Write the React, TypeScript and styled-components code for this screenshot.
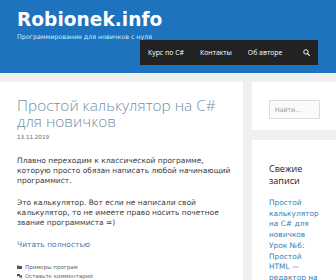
import React from 'react'
import styled, { createGlobalStyle } from 'styled-components'

const GlobalStyle = createGlobalStyle`
  html, body {
    margin: 0;
    padding: 0;
    background: #efefef;
    overflow: hidden;
  }
  body {
    font-family: 'DejaVu Sans', 'Open Sans', sans-serif;
    color: #3a3a3a;
  }
`

const Page = styled.div`
  width: 336px;
  height: 280px;
  overflow: hidden;
`

const Header = styled.header`
  background: #1e73be;
  height: 73px;
  position: relative;
  padding: 7px 0 0 17px;
  box-sizing: border-box;
`

const SiteTitle = styled.div`
  font-family: 'DejaVu Sans', sans-serif;
  font-size: 18.6px;
  font-weight: 700;
  color: #ffffff;
  line-height: 26px;
`

const Tagline = styled.div`
  font-size: 6.3px;
  color: #dbe8f5;
  line-height: 9px;
  margin-top: -1px;
`

const Nav = styled.nav`
  position: absolute;
  left: 140px;
  top: 40px;
  width: 178px;
  height: 25px;
  background: #222222;
  display: flex;
  align-items: center;
  box-sizing: border-box;
`

const NavItem = styled.span`
  font-family: 'Open Sans', sans-serif;
  color: #ffffff;
  font-size: 6.9px;
  padding: 0 8px;
  white-space: nowrap;
`

const SearchIcon = styled.svg`
  margin-left: auto;
  margin-right: 8px;
`

const Body = styled.div`
  display: flex;
  gap: 9px;
  padding-top: 9px;
`

const Main = styled.article`
  flex: 0 0 243px;
  background: #ffffff;
  padding: 16px 11px 0 17px;
  box-sizing: border-box;
  height: 200px;
`

const PostTitle = styled.h2`
  margin: 0;
  font-family: 'Open Sans', sans-serif;
  font-weight: 300;
  font-size: 15.4px;
  line-height: 16px;
  color: #7290a4;
`

const PostDate = styled.div`
  font-size: 5.6px;
  color: #666;
  margin-top: 3px;
  line-height: 8px;
`

const Para = styled.p`
  margin: 15px 0 0 0;
  font-size: 7.5px;
  line-height: 10px;
  color: #3a3a3a;
  & + & {
    margin-top: 12px;
  }
`

const ReadMore = styled.a`
  display: block;
  margin-top: 12px;
  font-size: 7.5px;
  line-height: 10px;
  color: #3b80b3;
  text-decoration: none;
`

const Meta = styled.div`
  margin-top: 13px;
  display: flex;
  flex-direction: column;
  gap: 1px;
`

const MetaRow = styled.div`
  display: flex;
  align-items: center;
  gap: 3px;
  font-size: 5.5px;
  line-height: 8px;
  color: #666;
`

const Sidebar = styled.aside`
  flex: 1;
  display: flex;
  flex-direction: column;
  gap: 10px;
`

const Widget = styled.div<{ $pad: string }>`
  background: #ffffff;
  padding: ${(p) => p.$pad};
  box-sizing: border-box;
`

const SearchInput = styled.div`
  width: 51px;
  height: 19px;
  border: 1px solid #dddddd;
  background: #fafafa;
  box-sizing: border-box;
  font-size: 6.2px;
  color: #999;
  padding: 5px 0 0 5px;
`

const WidgetTitle = styled.h3`
  margin: 0;
  font-family: 'Open Sans', sans-serif;
  font-size: 9px;
  font-weight: 400;
  line-height: 12px;
  color: #222;
`

const RecentList = styled.ul`
  list-style: none;
  margin: 11px 0 0 0;
  padding: 0;
`

const RecentItem = styled.li`
  font-size: 7.4px;
  line-height: 10.7px;
  color: #3b80b3;
`

const FolderIcon = () => (
  <svg width="5" height="4" viewBox="0 0 10 8">
    <path d="M0 1h4l1 1h5v6H0z" fill="#555" />
  </svg>
)

const CommentsIcon = () => (
  <svg width="5" height="5" viewBox="0 0 10 10">
    <path d="M0 0h6v4H3L1 6V4H0z" fill="#555" />
    <path d="M7 2h3v5H9v2L7 7H4V5h3z" fill="#555" />
  </svg>
)

export default function App() {
  return (
    <Page>
      <GlobalStyle />
      <Header>
        <SiteTitle>Robionek.info</SiteTitle>
        <Tagline>Программирование для новичков с нуля</Tagline>
        <Nav>
          <NavItem>Курс по C#</NavItem>
          <NavItem>Контакты</NavItem>
          <NavItem>Об авторе</NavItem>
          <SearchIcon width="7" height="7" viewBox="0 0 12 12">
            <circle cx="5" cy="5" r="3.8" fill="none" stroke="#fff" strokeWidth="1.6" />
            <path d="M7.8 7.8L11 11" stroke="#fff" strokeWidth="1.8" strokeLinecap="round" />
          </SearchIcon>
        </Nav>
      </Header>
      <Body>
        <Main>
          <PostTitle>Простой калькулятор на C# для новичков</PostTitle>
          <PostDate>13.11.2019</PostDate>
          <Para>
            Плавно переходим к классической программе, которую просто обязан
            написать любой начинающий программист.
          </Para>
          <Para>
            Это калькулятор. Вот если не написали свой калькулятор, то не
            имеете право носить почетное звание программиста =)
          </Para>
          <ReadMore>Читать полностью</ReadMore>
          <Meta>
            <MetaRow>
              <FolderIcon />
              Примеры програм
            </MetaRow>
            <MetaRow>
              <CommentsIcon />
              Оставьте комментарий
            </MetaRow>
          </Meta>
        </Main>
        <Sidebar>
          <Widget $pad="18px 0 11px 17px">
            <SearchInput>Найти...</SearchInput>
          </Widget>
          <Widget $pad="23px 14px 40px 17px">
            <WidgetTitle>Свежие записи</WidgetTitle>
            <RecentList>
              <RecentItem>Простой калькулятор на C# для новичков</RecentItem>
              <RecentItem>Урок №6: Простой HTML{'\u00a0'}— редактор на C#</RecentItem>
            </RecentList>
          </Widget>
        </Sidebar>
      </Body>
    </Page>
  )
}
